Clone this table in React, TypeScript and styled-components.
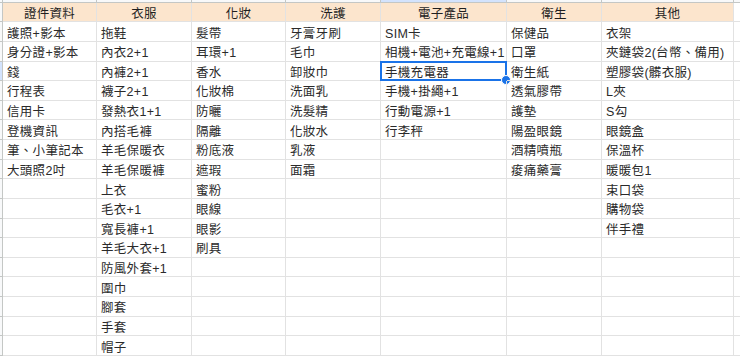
import React from 'react';
import styled, { createGlobalStyle, css } from 'styled-components';

const GlobalStyle = createGlobalStyle`
  html, body {
    margin: 0;
    padding: 0;
    background: #ffffff;
    overflow: hidden;
  }
`;

const headers = ['證件資料', '衣服', '化妝', '洗護', '電子產品', '衛生', '其他'];

const columns: string[][] = [
  ['護照+影本', '身分證+影本', '錢', '行程表', '信用卡', '登機資訊', '筆、小筆記本', '大頭照2吋'],
  ['拖鞋', '內衣2+1', '內褲2+1', '襪子2+1', '發熱衣1+1', '內搭毛褲', '羊毛保暖衣', '羊毛保暖褲', '上衣', '毛衣+1', '寬長褲+1', '羊毛大衣+1', '防風外套+1', '圍巾', '腳套', '手套', '帽子'],
  ['髮帶', '耳環+1', '香水', '化妝棉', '防曬', '隔離', '粉底液', '遮瑕', '蜜粉', '眼線', '眼影', '刷具'],
  ['牙膏牙刷', '毛巾', '卸妝巾', '洗面乳', '洗髮精', '化妝水', '乳液', '面霜'],
  ['SIM卡', '相機+電池+充電線+1', '手機充電器', '手機+掛繩+1', '行動電源+1', '行李秤'],
  ['保健品', '口罩', '衛生紙', '透氣膠帶', '護墊', '陽盈眼鏡', '酒精噴瓶', '痠痛藥膏'],
  ['衣架', '夾鏈袋2(台幣、備用)', '塑膠袋(髒衣服)', 'L夾', 'S勾', '眼鏡盒', '保溫杯', '暖暖包1', '束口袋', '購物袋', '伴手禮'],
];

const ROWS = 17;
const ACTIVE_COL = 4;
const ACTIVE_ROW = 2;

const Sheet = styled.div`
  display: grid;
  grid-template-columns: 3px 94px 95px 94px 95px 126px 95px 132px 1fr;
  grid-template-rows: 3px 19.3px repeat(${ROWS}, 19.63px);
  font-family: 'Liberation Sans', Arial, 'Noto Sans CJK TC', sans-serif;
  font-size: 12.5px;
  color: #2a2a2a;
  width: 740px;
  height: 357px;
  overflow: hidden;
`;

const Corner = styled.div`
  background: #f8f9fa;
  border-right: 1px solid #c4c7c5;
  border-bottom: 1px solid #c4c7c5;
`;

const ColHead = styled.div<{ $active?: boolean }>`
  background: ${p => (p.$active ? '#d3e3fd' : '#f8f9fa')};
  border-right: 1px solid #c4c7c5;
  border-bottom: 1px solid #c4c7c5;
`;

const RowHead = styled.div<{ $active?: boolean }>`
  background: ${p => (p.$active ? '#d3e3fd' : '#f8f9fa')};
  border-right: 1px solid #c4c7c5;
  border-bottom: 1px solid #c4c7c5;
`;

const Cell = styled.div<{ $header?: boolean }>`
  position: relative;
  box-sizing: border-box;
  display: flex;
  align-items: center;
  padding: 1px 4px 0;
  white-space: nowrap;
  letter-spacing: 0.3px;
  border-right: 1px solid #e2e2e2;
  border-bottom: 1px solid #e2e2e2;
  ${p =>
    p.$header &&
    css`
      justify-content: center;
      background: #fce5cd;
      color: #1f1f1f;
    `}
`;

const Selection = styled.div`
  position: absolute;
  left: -1px;
  top: -1px;
  right: -1px;
  bottom: -1px;
  border: 2px solid #1a73e8;
  pointer-events: none;
`;

const Handle = styled.div`
  position: absolute;
  right: -6px;
  bottom: -6px;
  width: 8px;
  height: 8px;
  border-radius: 50%;
  background: #1a73e8;
  border: 1px solid #ffffff;
`;

const App = () => {
  const totalCols = headers.length + 1;
  return (
    <>
      <GlobalStyle />
      <Sheet>
        <Corner />
        {Array.from({ length: totalCols }, (_, c) => (
          <ColHead key={`ch${c}`} $active={c === ACTIVE_COL} />
        ))}

        <RowHead />
        {headers.map(h => (
          <Cell key={h} $header>{h}</Cell>
        ))}
        <Cell />

        {Array.from({ length: ROWS }, (_, r) => (
          <React.Fragment key={`r${r}`}>
            <RowHead $active={r === ACTIVE_ROW} />
            {columns.map((col, c) => (
              <Cell key={`c${c}`}>
                {col[r] || ''}
                {r === ACTIVE_ROW && c === ACTIVE_COL && (
                  <Selection>
                    <Handle />
                  </Selection>
                )}
              </Cell>
            ))}
            <Cell />
          </React.Fragment>
        ))}
      </Sheet>
    </>
  );
};

export default App;
